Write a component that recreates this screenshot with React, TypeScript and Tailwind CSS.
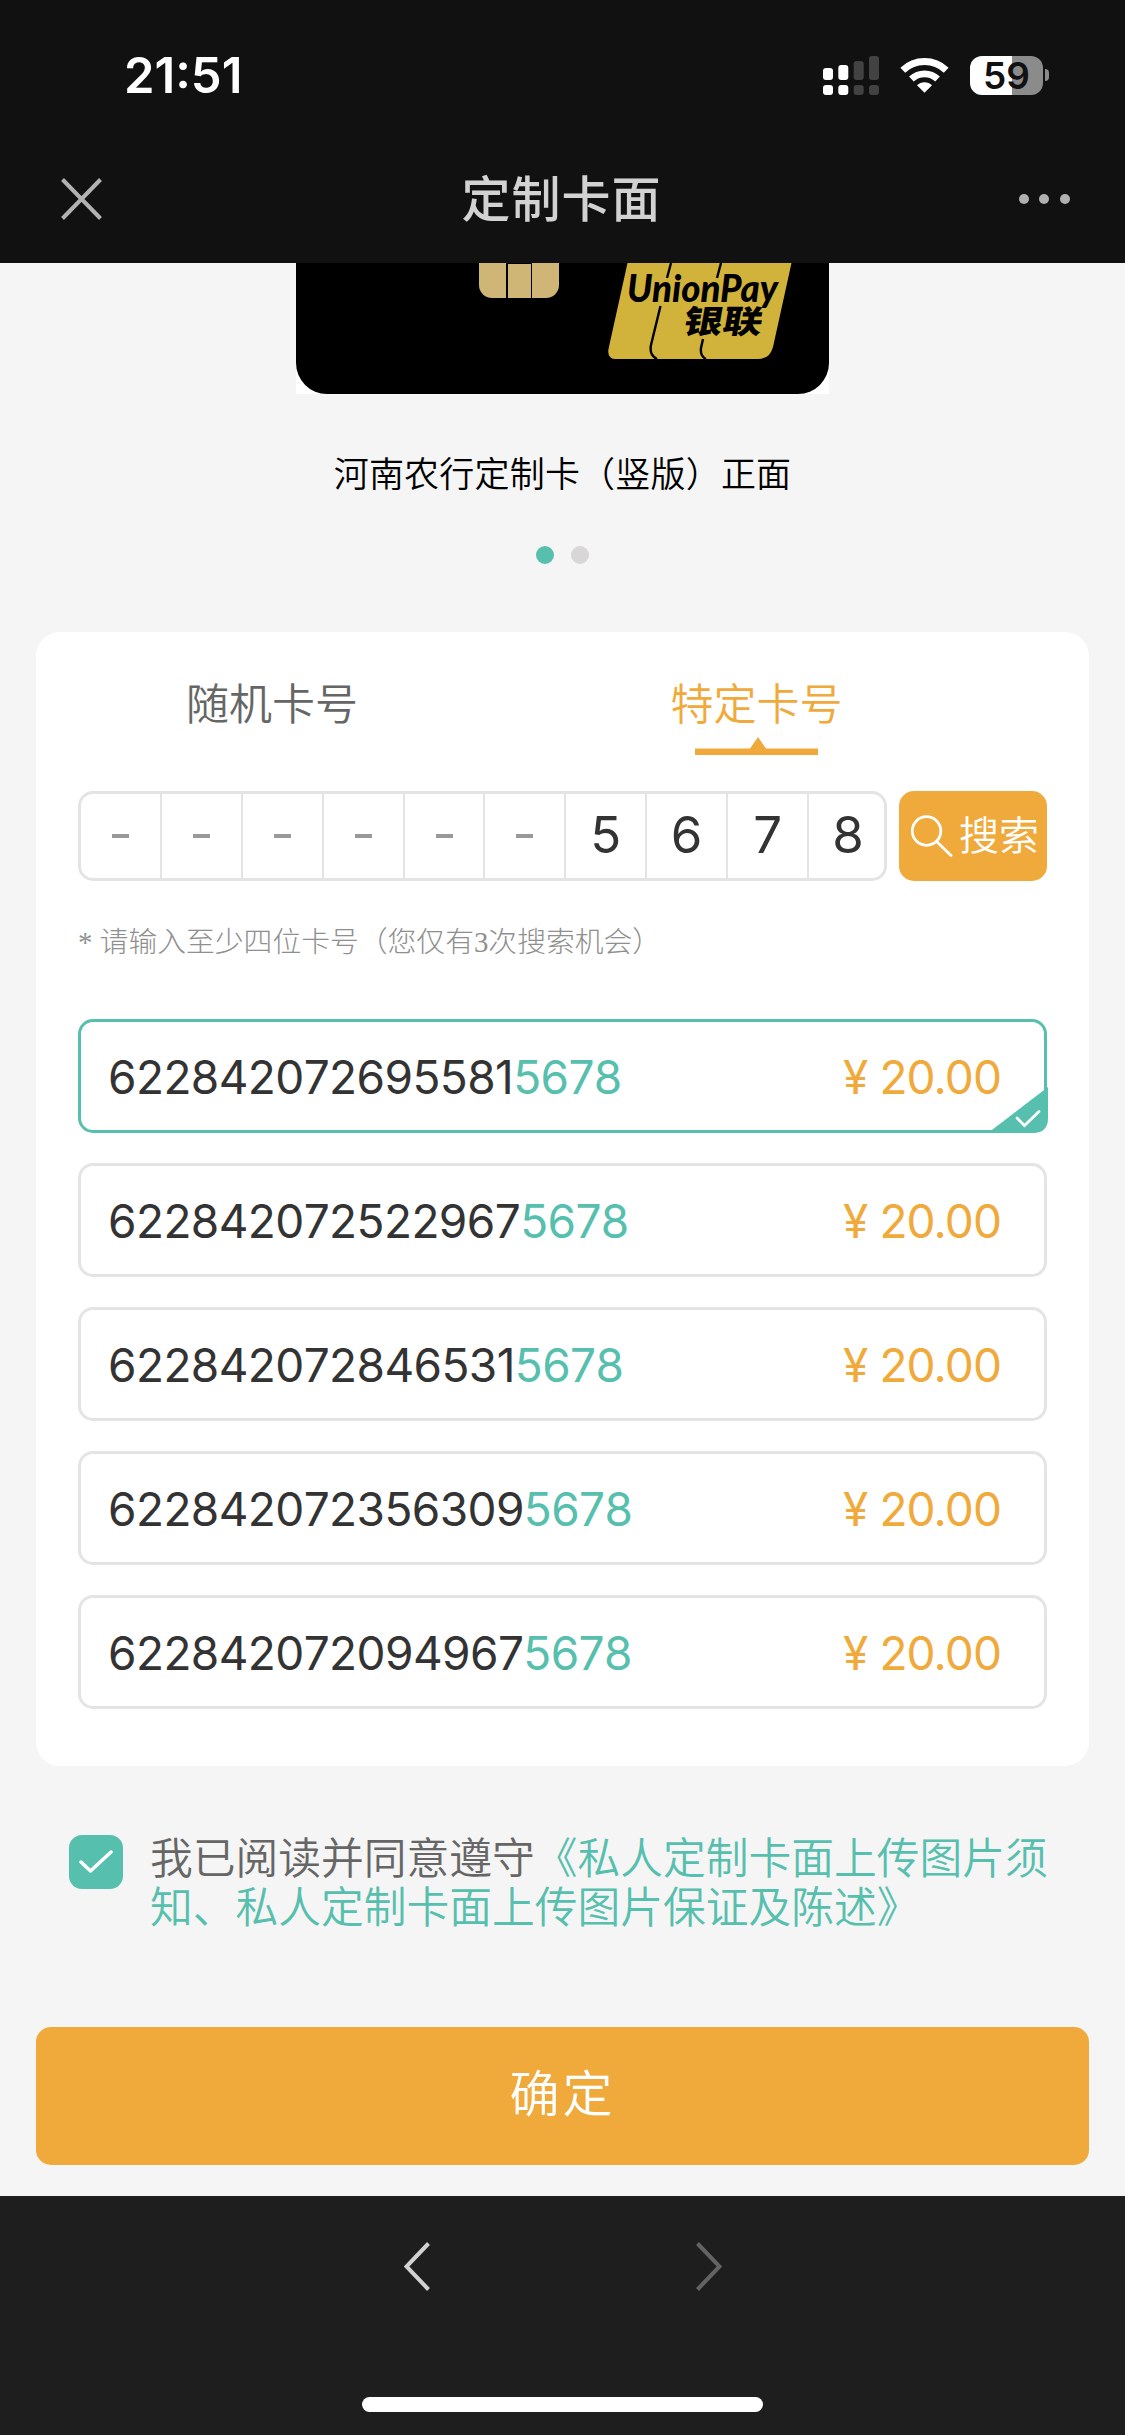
import React, { useState } from 'react';

interface CardNumber {
  prefix: string;
  suffix: string;
  price: string;
}

const CARD_NUMBERS: CardNumber[] = [
  { prefix: '622842072695581', suffix: '5678', price: '20.00' },
  { prefix: '622842072522967', suffix: '5678', price: '20.00' },
  { prefix: '622842072846531', suffix: '5678', price: '20.00' },
  { prefix: '622842072356309', suffix: '5678', price: '20.00' },
  { prefix: '622842072094967', suffix: '5678', price: '20.00' },
];

const SEARCH_DIGITS = ['', '', '', '', '', '', '5', '6', '7', '8'];

function SignalIcon() {
  return (
    <svg width="56" height="39" viewBox="0 0 56 39">
      <g fill="#fff">
        <rect x="0" y="12" width="10" height="12" rx="3" />
        <rect x="15.3" y="9" width="10" height="15" rx="3" />
        <rect x="0" y="29" width="10" height="10" rx="3" />
        <rect x="15.3" y="29" width="10" height="10" rx="3" />
      </g>
      <g fill="#424242">
        <rect x="30.7" y="5" width="10" height="19" rx="3" />
        <rect x="46" y="0" width="10" height="24" rx="3" />
        <rect x="30.7" y="29" width="10" height="10" rx="3" />
        <rect x="46" y="29" width="10" height="10" rx="3" />
      </g>
    </svg>
  );
}

function WifiIcon() {
  return (
    <svg width="49" height="36" viewBox="0 0 49 36">
      <path d="M2.8 13.2A31.5 31.5 0 0 1 46.2 13.2" fill="none" stroke="#fff" strokeWidth="7" />
      <path d="M11.4 22A19.3 19.3 0 0 1 37.6 22" fill="none" stroke="#fff" strokeWidth="6.8" />
      <path d="M24.5 35.8L17 28.2C21 24.2 28 24.2 32 28.2Z" fill="#fff" />
    </svg>
  );
}

function BatteryIcon() {
  return (
    <div className="flex items-center gap-0.5">
      <div className="flex h-[39px] w-[73px] items-center justify-center rounded-[12px] bg-linear-to-r from-white from-[58%] to-[#8b8b8b] to-[58%] font-[Inter] text-[37px] leading-none font-semibold text-[#111]">
        59
      </div>
      <div className="h-3 w-1 rounded-r-full bg-[#8b8b8b]" />
    </div>
  );
}

function Header() {
  return (
    <header className="h-[263px] bg-[#111111]">
      <div className="flex h-[150px] items-center justify-between pr-[76px] pl-[124px]">
        <span className="font-[Inter] text-[49px] leading-none font-semibold text-white">21:51</span>
        <div className="flex items-center">
          <SignalIcon />
          <div className="w-[21px]" />
          <WifiIcon />
          <div className="w-[21px]" />
          <BatteryIcon />
        </div>
      </div>
      <div className="flex h-[97px] items-center justify-between pr-[55px] pl-[61px]">
        <svg width="41" height="42" viewBox="0 0 41 42" stroke="#b2b2b2" strokeWidth="4">
          <path d="M1.5 1.5L39.5 40.5M39.5 1.5L1.5 40.5" />
        </svg>
        <h1 className="pb-[6px] pl-[2px] text-[49px] leading-none font-medium tracking-[1px] text-[#d2d2d2]">
          定制卡面
        </h1>
        <div className="flex gap-[10.500px]">
          <i className="size-[10px] rounded-full bg-[#b0b0b0]" />
          <i className="size-[10px] rounded-full bg-[#b0b0b0]" />
          <i className="size-[10px] rounded-full bg-[#b0b0b0]" />
        </div>
      </div>
    </header>
  );
}

function UnionPayLogo() {
  return (
    <svg width="184" height="96" viewBox="0 0 184 96">
      <path d="M19.5 0H183.5L165 84Q162 96 150 96H8Q-1 96 0.500 86Z" fill="#d1b33b" />
      <g fill="none" stroke="#000" strokeWidth="2.4">
        <path d="M63 0L59 15" />
        <path d="M113 0L109 15" />
        <path d="M52.500 43L43 82Q41 92 49 96" />
        <path d="M95 76L93 85Q92 93 98 96" />
      </g>
      <text
        x="19"
        y="38.500"
        textLength="151"
        lengthAdjust="spacingAndGlyphs"
        className="font-[Lato] text-[38px] font-black italic"
      >
        UnionPay
      </text>
      <text
        x="73"
        y="70"
        textLength="79"
        transform="translate(13 0) skewX(-10)"
        lengthAdjust="spacingAndGlyphs"
        className="text-[32px] font-black"
      >
        银联
      </text>
    </svg>
  );
}

function CardPreview() {
  return (
    <section className="flex flex-col items-center">
      <div className="bg-white">
        <div className="flex h-[131px] w-[533px] items-start rounded-b-[31px] bg-black pl-[183px]">
          <div className="flex h-[35px] w-[80px] gap-[1.500px] overflow-hidden rounded-b-[13px]">
            <div className="w-[27px] bg-[#cfb677]" />
            <div className="mt-px w-[23px] bg-[#cfb677]" />
            <div className="flex-1 bg-[#cfb677]" />
          </div>
          <div className="ml-[49px]">
            <UnionPayLogo />
          </div>
        </div>
      </div>
      <p className="mt-[58px] h-[42px] text-[35px] leading-[40px] font-[350] tracking-[0.200px] text-black">
        河南农行定制卡（竖版）正面
      </p>
      <div className="mt-[52px] flex gap-[17px]">
        <i className="size-[18px] rounded-full bg-[#57bfae]" />
        <i className="size-[18px] rounded-full bg-[#d8d6d7]" />
      </div>
    </section>
  );
}

function Tabs() {
  return (
    <div className="flex px-[42px] pt-[44px] text-[43px] leading-[50px] font-[350]">
      <button className="flex w-[388px] flex-col items-center text-[#666]">
        <span>随机卡号</span>
      </button>
      <button className="flex flex-1 flex-col items-center text-[#f0aa3c]">
        <span className="w-[172px]">特定卡号</span>
        <svg className="mt-[11px]" width="123" height="18" viewBox="0 0 123 18" fill="currentColor">
          <path d="M0 11.500H55L63 0L71 11.500H123V18H0Z" />
        </svg>
      </button>
    </div>
  );
}

function SearchBar() {
  return (
    <div className="mt-9 flex gap-3">
      <div className="flex h-[90px] w-[809px] rounded-[15px] border-3 border-[#e4e4e4]">
        {SEARCH_DIGITS.map((digit, index) => (
          <div
            key={index}
            className="flex w-[80.900px] shrink-0 items-center justify-center border-r-2 border-[#e4e4e4] pb-[3px] font-[Inter] text-[51px] leading-none text-[#333] last:w-[78px] last:border-r-0"
          >
            {digit || <span className="mt-[3px] h-1 w-[17px] bg-[#999]" />}
          </div>
        ))}
      </div>
      <button className="flex h-[90px] w-[148px] items-center rounded-[15px] bg-[#f0aa3c] pl-3 text-white">
        <svg width="42" height="42" viewBox="0 0 42 42" fill="none" stroke="currentColor" strokeWidth="2.800">
          <circle cx="15.500" cy="16" r="14.300" />
          <path d="M26 27L40 40.500" strokeLinecap="round" />
        </svg>
        <span className="ml-[6px] pb-[6px] text-[40px] leading-none font-[350]">搜索</span>
      </button>
    </div>
  );
}

interface CardNumberRowProps {
  card: CardNumber;
  selected: boolean;
  onSelect: () => void;
}

function CardNumberRow({ card, selected, onSelect }: CardNumberRowProps) {
  return (
    <li
      onClick={onSelect}
      className={`relative flex h-[114px] items-center justify-between rounded-[15px] border-3 pt-[2px] pr-[43px] pl-[27px] font-[Inter] text-[46px] leading-none ${
        selected ? 'border-[#57bfae]' : 'border-[#e4e4e4]'
      }`}
    >
      <span className="tracking-[-0.600px] text-[#333] [font-kerning:none]">
        {card.prefix}
        <span className="text-[#57bfae]">{card.suffix}</span>
      </span>
      <span className="tracking-[-0.900px] text-[#f0aa3c]">¥ {card.price}</span>
      {selected && (
        <svg className="absolute -right-1 -bottom-[3px]" width="60" height="46" viewBox="0 0 60 46">
          <path d="M0 46L60 0V31Q60 46 45 46Z" fill="#57bfae" />
          <path d="M29 31L36.500 38.500L51 24.500" fill="none" stroke="#fff" strokeWidth="2.800" strokeLinecap="round" />
        </svg>
      )}
    </li>
  );
}

export default function App() {
  const [selectedIndex, setSelectedIndex] = useState(0);
  const [agreed, setAgreed] = useState(true);

  return (
    <div className="flex h-[2435px] w-[1125px] flex-col bg-[#f5f5f5] font-['Noto_Sans_CJK_SC',sans-serif]">
      <Header />
      <CardPreview />

      <section className="mx-9 mt-[68px] h-[1134px] rounded-[24px] bg-white">
        <Tabs />
        <div className="px-[42px]">
          <SearchBar />
          <p className="mt-[43px] h-[36px] font-['Liberation_Serif','Noto_Sans_CJK_SC',serif] text-[28.800px] leading-[36px] font-light text-[#8f8f8f]">
            * 请输入至少四位卡号（您仅有3次搜索机会）
          </p>
          <ul className="mt-[59px] flex flex-col gap-[30px]">
            {CARD_NUMBERS.map((card, index) => (
              <CardNumberRow
                key={card.prefix}
                card={card}
                selected={index === selectedIndex}
                onSelect={() => setSelectedIndex(index)}
              />
            ))}
          </ul>
        </div>
      </section>

      <div className="mt-[69px] flex h-[98px] pl-[69px]">
        <button
          onClick={() => setAgreed(!agreed)}
          className="flex size-[54px] items-center justify-center rounded-[13px] bg-[#57bfae]"
        >
          {agreed && (
            <svg width="34" height="24" viewBox="0 0 34 24" fill="none" stroke="#fff" strokeWidth="3.500">
              <path d="M2 12L11.500 21L32 2" strokeLinecap="round" strokeLinejoin="round" />
            </svg>
          )}
        </button>
        <p className="-mt-1 ml-[27px] w-[905px] text-[42.750px] leading-[49px] font-[350] text-[#666]">
          我已阅读并同意遵守
          <span className="text-[#57bfae]">《私人定制卡面上传图片须知、私人定制卡面上传图片保证及陈述》</span>
        </p>
      </div>

      <button className="mx-9 mt-[94px] h-[138px] rounded-[15px] bg-[#f0aa3c] pb-[13px] text-[50px] leading-none font-[350] tracking-[3px] text-white">
        确定
      </button>

      <footer className="mt-auto flex h-[239px] flex-col items-center bg-[#1e1e1e]">
        <div className="mt-[46px] flex w-[318px] justify-between">
          <svg width="26" height="49" viewBox="0 0 26 49" fill="none" stroke="#d2d2d2" strokeWidth="4">
            <path d="M24.500 1.500L2.500 24.500L24.500 47.500" />
          </svg>
          <svg width="26" height="49" viewBox="0 0 26 49" fill="none" stroke="#636363" strokeWidth="4">
            <path d="M1.500 1.500L23.500 24.500L1.500 47.500" />
          </svg>
        </div>
        <div className="mt-[106px] h-[15px] w-[401px] rounded-full bg-white" />
      </footer>
    </div>
  );
}
